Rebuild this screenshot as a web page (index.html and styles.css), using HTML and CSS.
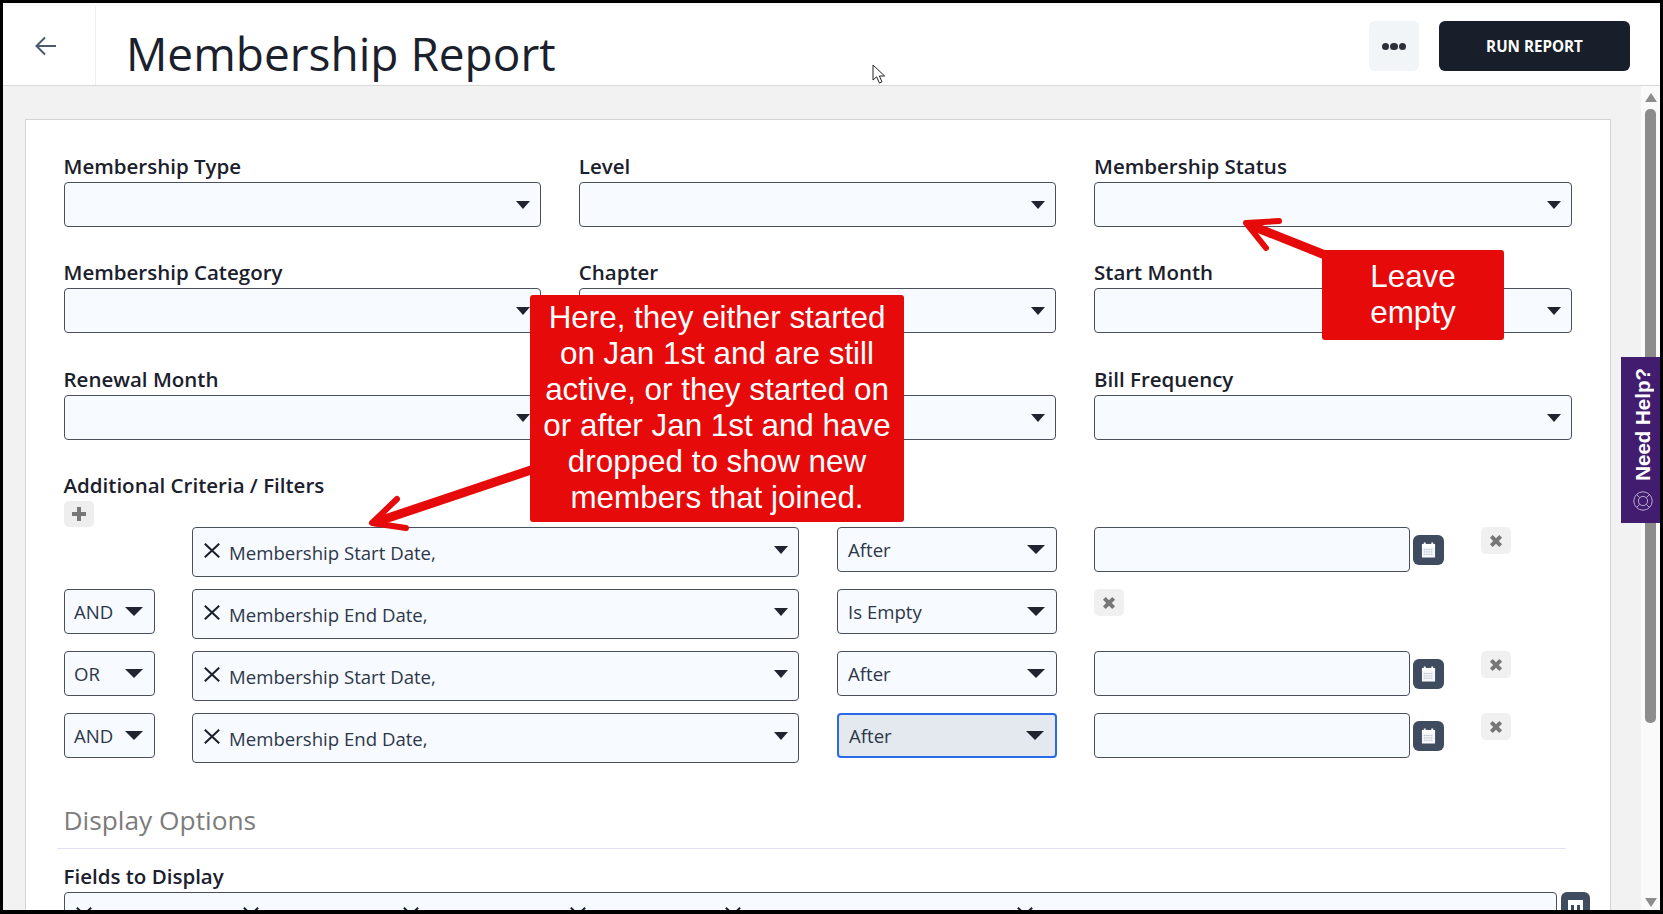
FILE: index.html
```html
<!DOCTYPE html>
<html lang="en">
<head>
<meta charset="utf-8">
<title>Membership Report</title>
<link rel="stylesheet" href="styles.css">
</head>
<body>
<svg width="0" height="0" class="defs">
  <symbol id="cal" viewBox="0 0 16 17">
    <path d="M1 3h14v13H1z" fill="#f4f7fb"/>
    <path d="M1 1.5h14v3.5H1z" fill="#fff"/>
    <path d="M3 0h2v3H3zM11 0h2v3h-2z" fill="#fff"/>
    <path d="M3 7.5h10M3 10h10M3 12.5h10" stroke="#9aa3ad" stroke-width="1" stroke-dasharray="1 1"/>
  </symbol>
  <symbol id="x" viewBox="0 0 16 15">
    <path d="M.8.7l14.4 13.6M15.2.7L.8 14.3" stroke="#1a202c" stroke-width="2" fill="none"/>
  </symbol>
  <symbol id="xb" viewBox="0 0 12 12">
    <path d="M2 2l8 8M10 2l-8 8" stroke="#777" stroke-width="3.4" fill="none"/>
  </symbol>
</svg>
<div class="page">
  <header class="topbar">
    <a class="back">
      <svg width="22" height="20" viewBox="0 0 22 20"><path d="M21 10H2M10 1.5L1.5 10l8.5 8.5" fill="none" stroke="#4a5a70" stroke-width="2"/></svg>
    </a>
    <h1 class="title">Membership Report</h1>
    <div class="actions">
      <button class="more"><i></i><i></i><i></i></button>
      <button class="run">RUN REPORT</button>
    </div>
  </header>
  <div class="body">
    <main class="content">
      <section class="card">
        <div class="fields">
          <div class="field"><label>Membership Type</label><div class="select"></div></div>
          <div class="field"><label>Level</label><div class="select"></div></div>
          <div class="field"><label>Membership Status</label><div class="select"></div></div>
          <div class="field"><label>Membership Category</label><div class="select"></div></div>
          <div class="field"><label>Chapter</label><div class="select"></div></div>
          <div class="field"><label>Start Month</label><div class="select"></div></div>
          <div class="field"><label>Renewal Month</label><div class="select"></div></div>
          <div class="field"><label class="blank"></label><div class="select"></div></div>
          <div class="field"><label>Bill Frequency</label><div class="select"></div></div>
        </div>
        <div class="criteria">
          <label>Additional Criteria / Filters</label>
          <button class="add"><svg width="14" height="14" viewBox="0 0 14 14"><path d="M7 0v14M0 7h14" stroke="#777" stroke-width="4"/></svg></button>
        </div>
        <div class="filters">
          <div></div>
          <div class="multi"><svg class="mx"><use href="#x"/></svg><span>Membership Start Date,</span></div>
          <div class="select op">After</div>
          <div class="value"><div class="input"></div><button class="calbtn"><svg width="15" height="17"><use href="#cal"/></svg></button><button class="rm"><svg width="14" height="14"><use href="#xb"/></svg></button></div>

          <div class="select logic">AND</div>
          <div class="multi"><svg class="mx"><use href="#x"/></svg><span>Membership End Date,</span></div>
          <div class="select op">Is Empty</div>
          <div class="value"><button class="rm flush"><svg width="14" height="14"><use href="#xb"/></svg></button></div>

          <div class="select logic">OR</div>
          <div class="multi"><svg class="mx"><use href="#x"/></svg><span>Membership Start Date,</span></div>
          <div class="select op">After</div>
          <div class="value"><div class="input"></div><button class="calbtn"><svg width="15" height="17"><use href="#cal"/></svg></button><button class="rm"><svg width="14" height="14"><use href="#xb"/></svg></button></div>

          <div class="select logic">AND</div>
          <div class="multi"><svg class="mx"><use href="#x"/></svg><span>Membership End Date,</span></div>
          <div class="select op focus">After</div>
          <div class="value"><div class="input"></div><button class="calbtn"><svg width="15" height="17"><use href="#cal"/></svg></button><button class="rm"><svg width="14" height="14"><use href="#xb"/></svg></button></div>
        </div>
        <h2 class="section">Display Options</h2>
        <div class="display">
          <label>Fields to Display</label>
          <div class="display-row">
            <div class="chips">
              <span class="chip"><svg class="mx"><use href="#x"/></svg>Full Name</span>
              <span class="chip"><svg class="mx"><use href="#x"/></svg>Preferred Email</span>
              <span class="chip"><svg class="mx"><use href="#x"/></svg>Preferred Phone</span>
              <span class="chip"><svg class="mx"><use href="#x"/></svg>Member Address</span>
              <span class="chip"><svg class="mx"><use href="#x"/></svg>Membership Level Name</span>
              <span class="chip"><svg class="mx"><use href="#x"/></svg>Start Date</span>
            </div>
            <button class="colbtn"><svg width="15" height="17" viewBox="0 0 15 17"><path d="M0 0h15v17H0z" fill="#fff"/><path d="M3 5h3v12H3zM9 5h3v12H9z" fill="#3f4c60"/></svg></button>
          </div>
        </div>
      </section>
    </main>
    <div class="scrollbar">
      <span class="arrow up"></span>
      <span class="thumb"></span>
      <span class="arrow down"></span>
    </div>
  </div>

  <aside class="help">
    <svg width="20" height="20" viewBox="0 0 20 20" fill="none" stroke="#b9abd3" stroke-width="1"><circle cx="10" cy="10" r="9.2"/><circle cx="10" cy="10" r="4.6"/><path d="M3.5 3.5l3.2 3.2M16.5 3.5l-3.2 3.2M3.5 16.5l3.2-3.2M16.5 16.5l-3.2-3.2"/></svg>
    <span>Need Help?</span>
  </aside>

  <svg class="arrows" width="1663" height="914" viewBox="0 0 1663 914" fill="none" stroke="#e60a0a" stroke-linecap="round" stroke-linejoin="round">
    <path d="M534 469L376 522" stroke-width="9"/>
    <path d="M397 499L372 523L406 528" stroke-width="6"/>
    <path d="M1330 257L1250 225" stroke-width="9"/>
    <path d="M1279 221L1246 223L1266 248" stroke-width="6"/>
  </svg>
  <div class="note note-main">Here, they either started<br>on Jan 1st and are still<br>active, or they started on<br>or after Jan 1st and have<br>dropped to show new<br>members that joined.</div>
  <div class="note note-side">Leave<br>empty</div>
  <svg class="cursor" width="14" height="20" viewBox="0 0 14 20"><path d="M1 1v15l3.6-3.2L7.4 19l2.6-1.2-2.6-5.8H12.6z" fill="#fff" stroke="#222" stroke-width="1"/></svg>
</div>
</body>
</html>
```
FILE: styles.css
```css
* { box-sizing: border-box; }
html, body { margin: 0; padding: 0; }
body { font-family: "Open Sans", "Noto Sans", sans-serif; color: #1a202c; overflow: hidden; }
.defs { position: absolute; }
button { border: 0; padding: 0; font: inherit; }

.page {
  position: relative;
  width: 1663px;
  height: 914px;
  padding: 3px 3px 4px 3px;
  background: #000;
  display: flex;
  flex-direction: column;
  overflow: hidden;
}

/* header */
.topbar {
  height: 83px;
  flex: none;
  display: flex;
  align-items: flex-start;
  background: #fff;
  border-bottom: 1px solid #d9d9d9;
  box-shadow: inset 0 3px 0 #f9f9f9;
}
.back {
  width: 93px;
  height: 79px;
  margin-top: 3px;
  background: #fff;
  border-right: 1px solid #eeeeee;
  display: flex;
  padding: 30px 0 0 32px;
}
.title {
  margin: 19px 0 0 30px;
  font-size: 46px;
  line-height: 62px;
  font-weight: 400;
  color: #1a202c;
}
.actions {
  margin: 18px 30px 0 auto;
  display: flex;
  gap: 20px;
}
.more {
  width: 50px;
  height: 50px;
  background: #f2f5f8;
  border-radius: 6px;
  display: flex;
  align-items: center;
  justify-content: center;
  gap: 1px;
  padding-top: 1px;
}
.more i { width: 7.5px; height: 7.5px; border-radius: 50%; background: #2d3039; }
.run {
  width: 191px;
  height: 50px;
  background: #181f2a;
  border-radius: 6px;
  color: #fff;
  font-size: 15.2px;
  font-weight: 700;
  padding-bottom: 1px;
}

/* body */
.body { flex: 1; min-height: 0; display: flex; overflow: hidden; }
.content {
  flex: 1;
  min-width: 0;
  background: #f2f2f2;
  padding: 33px 30px 0 22px;
}
.card {
  height: 1000px;
  background: #fff;
  border: 1px solid #d4d4d4;
  padding: 34px 38px 0 37.5px;
}
label {
  display: block;
  font-size: 20.5px;
  line-height: 24px;
  font-weight: 600;
  color: #1a202c;
  margin-bottom: 4px;
}
.blank { height: 24px; }
.fields {
  display: grid;
  grid-template-columns: repeat(3, 477.5px);
  grid-template-rows: 73px 74px auto;
  column-gap: 37.75px;
  row-gap: 33px;
}

/* selects */
.select {
  height: 45px;
  background: #f7faff;
  border: 1px solid #4a4f5c;
  border-radius: 4px;
  display: flex;
  align-items: center;
  padding: 0 10px;
  font-size: 18.6px;
  color: #2d3748;
}
.select::after {
  content: "";
  margin-left: auto;
  border-style: solid;
  border-width: 8px 7.5px 0;
  border-color: #1f2430 transparent transparent;
}
.op { width: 220px; padding: 0 11px 0 10px; }
.op::after, .logic::after { border-width: 9px 9px 0; }
.logic { width: 91px; padding: 0 11px 0 9.5px; }
.focus { background: #e4e8ef; border: 2px solid #2a6ae8; padding-left: 10px; }

.criteria { margin-top: 33px; }
.add {
  display: flex;
  align-items: center;
  justify-content: center;
  width: 30px;
  height: 26px;
  background: #eeeeee;
  border-radius: 5px;
}
.filters {
  display: grid;
  grid-template-columns: 128.5px 645px 257px 1fr;
  row-gap: 12px;
  align-items: start;
}
.multi {
  width: 607px;
  height: 50px;
  background: #f7faff;
  border: 1px solid #4a4f5c;
  border-radius: 4px;
  display: flex;
  align-items: flex-start;
  padding: 15px 10px 0 11px;
  font-size: 18.6px;
  line-height: 22px;
  color: #2d3748;
}
.multi::after {
  content: "";
  margin: 3px 0 0 auto;
  border-style: solid;
  border-width: 8px 7.5px 0;
  border-color: #1f2430 transparent transparent;
}
.mx { width: 16px; height: 15px; flex: none; margin-right: 9px; }
.multi span { margin-top: -1px; }
.value { display: flex; align-items: flex-start; }
.input {
  width: 316px;
  height: 45px;
  background: #f7faff;
  border: 1px solid #4a4f5c;
  border-radius: 4px;
}
.calbtn {
  width: 31px;
  height: 30px;
  margin: 8px 0 0 3px;
  background: #3f4c60;
  border-radius: 6px;
  display: flex;
  align-items: center;
  justify-content: center;
}
.rm {
  width: 30px;
  height: 27px;
  margin-left: 37px;
  background: #f0f0f0;
  border-radius: 5px;
  display: flex;
  align-items: center;
  justify-content: center;
}
.rm.flush { margin-left: 0; }

/* display options */
.section {
  margin: 40px 6px 0 -6.5px;
  padding: 0 0 10px 6.5px;
  font-size: 26.3px;
  line-height: 35px;
  font-weight: 400;
  color: #7c7c7c;
  border-bottom: 1px solid #e1e1f3;
}
.display { margin-top: 15px; }
.display-row { display: flex; align-items: flex-start; gap: 4px; }
.chips {
  flex: none;
  width: 1493px;
  height: 60px;
  background: #f7faff;
  border: 1px solid #4a4f5c;
  border-radius: 4px;
  padding: 14px 0 0 11px;
  display: grid;
  grid-template-columns: 167px 160px 167px 155px 292px 1fr;
  font-size: 18.6px;
  line-height: 22px;
  color: #2d3748;
}
.chip { display: flex; white-space: nowrap; overflow: hidden; }
.colbtn {
  flex: none;
  width: 29px;
  height: 30px;
  background: #3f4c60;
  border-radius: 6px;
  display: flex;
  justify-content: center;
  padding-top: 8px;
}

/* scrollbar */
.scrollbar {
  width: 19px;
  flex: none;
  background: #fafafa;
  display: flex;
  flex-direction: column;
  align-items: center;
  padding: 7px 0 3px;
}
.thumb { width: 11px; height: 614px; margin-top: 7px; background: #8c8c8c; border-radius: 5px; flex: none; }
.arrow { border-style: solid; flex: none; }
.arrow.up { border-width: 0 6px 9px; border-color: transparent transparent #8c8c8c; }
.arrow.down { margin-top: auto; border-width: 9px 6.5px 0; border-color: #8c8c8c transparent transparent; }

/* overlays */
.help {
  position: absolute;
  left: 1621px;
  top: 357px;
  width: 39px;
  height: 166px;
  background: #421c6e;
  color: #fff;
  display: flex;
  flex-direction: column-reverse;
  align-items: center;
  padding: 11px 0 12px 4px;
  gap: 10px;
}
.help span {
  writing-mode: vertical-rl;
  transform: rotate(180deg);
  font-family: "Liberation Sans", sans-serif;
  font-weight: 700;
  font-size: 20.5px;
  line-height: 22px;
  white-space: nowrap;
}
.arrows { position: absolute; left: 0; top: 0; pointer-events: none; }
.note {
  position: absolute;
  background: #e60a0a;
  color: #fff;
  font-family: "Liberation Sans", Arial, sans-serif;
  font-size: 31.4px;
  line-height: 36px;
  text-align: center;
  border-radius: 3px;
  padding-top: 5px;
}
.note-main { left: 530px; top: 295px; width: 374px; height: 227px; }
.note-side { left: 1322px; top: 250px; width: 182px; height: 90px; padding-top: 8.5px; }
.cursor { position: absolute; left: 872px; top: 64px; }
```
